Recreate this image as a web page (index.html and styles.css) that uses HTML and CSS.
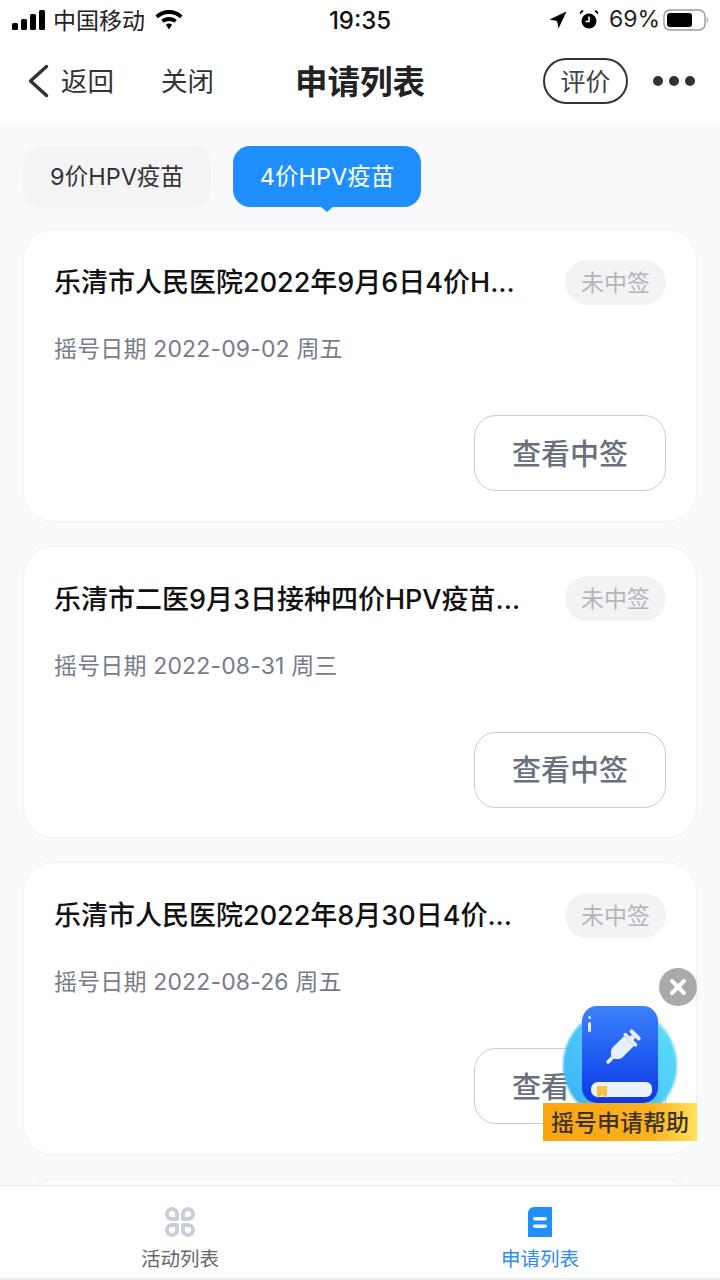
FILE: index.html
```html
<!DOCTYPE html>
<html>
    <head>
        <meta charset="utf-8">
        <title>申请列表</title>
        <link rel="stylesheet" href="styles.css">
    </head>
    <body>
        <div class="status">
            <div class="status-side">
                <svg class="signal" width="34" height="22" viewBox="0 0 34 22"><rect x="1" y="14" width="6" height="7" rx="1.5"/><rect x="10" y="10" width="6" height="11" rx="1.5"/><rect x="19" y="5" width="6" height="16" rx="1.5"/><rect x="28" y="1" width="6" height="20" rx="1.5"/></svg>
                <span class="carrier">中国移动</span>
                <svg class="wifi" width="30" height="22" viewBox="0 0 30 22"><path d="M15 1C9.500 1 5 3 1.500 6.400L4 9.200C7 6.500 10.900 5 15 5S23 6.500 26 9.200L28.500 6.400C25 3 20.500 1 15 1ZM15 8C12 8 9.300 9.100 7.200 11L9.700 13.800C11.100 12.600 13 11.900 15 11.900S18.900 12.600 20.300 13.800L22.800 11C20.700 9.100 18 8 15 8ZM15 14.500C13.800 14.500 12.700 14.900 11.900 15.700L15 20.500L18.100 15.700C17.300 14.900 16.200 14.500 15 14.500Z"/></svg>
            </div>
            <div class="clock">19:35</div>
            <div class="status-side">
                <svg class="arrow" width="18" height="18" viewBox="0 0 18 18"><path d="M17.500 .5L.5 8.500L8 10L9.500 17.500Z"/></svg>
                <svg class="alarm" width="20" height="22" viewBox="0 0 20 22"><circle cx="10" cy="12" r="7.500"/><path d="M1 5.500L5 1.800L2.800 1.200L.8 3ZM19 5.500L15 1.800L17.200 1.200L19.200 3Z"/><path d="M10 7.500V12.500H6.500" fill="none" stroke="#fff" stroke-width="1.600"/></svg>
                <span class="percent">69%</span>
                <svg class="battery" width="46" height="24" viewBox="0 0 46 24"><rect x="1" y="2" width="41" height="20" rx="6" fill="#fff" stroke="#999" stroke-width="1.400"/><rect x="4" y="5" width="25" height="14" rx="3"/><path d="M43.500 9V15C45 14.500 45.500 13.500 45.500 12S45 9.500 43.500 9Z" fill="#bbb"/></svg>
            </div>
        </div>
        <div class="nav">
            <div class="nav-left">
                <svg class="back" width="24" height="36" viewBox="0 0 24 36"><path d="M21.500 3.500L5.500 18L21.500 32.500" fill="none" stroke="#333" stroke-width="3.500" stroke-linecap="round" stroke-linejoin="round"/></svg>
                <span class="nav-link">返回</span>
                <span class="nav-link close-link">关闭</span>
            </div>
            <h1 class="nav-title">申请列表</h1>
            <div class="nav-right">
                <span class="rate">评价</span>
                <svg width="42" height="12" viewBox="0 0 42 12" fill="#333"><circle cx="5" cy="6" r="5"/><circle cx="21" cy="6" r="5"/><circle cx="37" cy="6" r="5"/></svg>
            </div>
        </div>
        <div class="main">
            <div class="tabs">
                <div class="tab">9价HPV疫苗</div>
                <div class="tab tab-on">4价HPV疫苗</div>
            </div>
            <div class="list">
                <div class="card">
                    <div class="card-top">
                        <div class="card-title">乐清市人民医院2022年9月6日4价H...</div>
                        <span class="badge">未中签</span>
                    </div>
                    <div class="card-date">摇号日期 2022-09-02 周五</div>
                    <div class="card-foot"><span class="check">查看中签</span></div>
                </div>
                <div class="card">
                    <div class="card-top">
                        <div class="card-title">乐清市二医9月3日接种四价HPV疫苗...</div>
                        <span class="badge">未中签</span>
                    </div>
                    <div class="card-date">摇号日期 2022-08-31 周三</div>
                    <div class="card-foot"><span class="check">查看中签</span></div>
                </div>
                <div class="card">
                    <div class="card-top">
                        <div class="card-title">乐清市人民医院2022年8月30日4价...</div>
                        <span class="badge">未中签</span>
                    </div>
                    <div class="card-date">摇号日期 2022-08-26 周五</div>
                    <div class="card-foot"><span class="check">查看中签</span></div>
                </div>
                <div class="card"></div>
            </div>
        </div>
        <div class="tabbar">
            <div class="bar-item">
                <svg width="32" height="32" viewBox="0 0 32 32" fill="none" stroke="#c9ced8" stroke-width="4" stroke-linejoin="round"><path d="M8 3A5 5 0 0 1 13 8V13H8A5 5 0 0 1 8 3Z"/><path d="M24 3A5 5 0 0 0 19 8V13H24A5 5 0 0 0 24 3Z"/><path d="M8 29A5 5 0 0 0 13 24V19H8A5 5 0 0 0 8 29Z"/><path d="M24 29A5 5 0 0 1 19 24V19H24A5 5 0 0 1 24 29Z"/></svg>
                <span>活动列表</span>
            </div>
            <div class="bar-item bar-on">
                <svg width="32" height="32" viewBox="0 0 32 32"><path d="M10 1H27A1 1 0 0 1 28 2V31H4V7A6 6 0 0 1 10 1Z" fill="#1f8fff"/><rect x="9" y="11" width="14" height="3.500" rx="1.700" fill="#fff"/><rect x="9" y="18.500" width="14" height="3.500" rx="1.700" fill="#fff"/></svg>
                <span>申请列表</span>
            </div>
        </div>
        <div class="helper">
            <svg class="helper-close" width="38" height="38" viewBox="0 0 38 38"><circle cx="19" cy="19" r="19" fill="#aaa"/><path d="M13 13L25 25M25 13L13 25" stroke="#fff" stroke-width="4" stroke-linecap="round"/></svg>
            <svg class="helper-book" width="116" height="136" viewBox="0 0 116 136">
                <defs>
                    <linearGradient id="ball" x1="1" y1="0" x2="0" y2="1"><stop offset="0" stop-color="#62e2fb"/><stop offset="1" stop-color="#38aef6"/></linearGradient>
                    <linearGradient id="cover" x1="0" y1="0" x2="0" y2="1"><stop offset="0" stop-color="#3d82fb"/><stop offset="1" stop-color="#0a38e6"/></linearGradient>
                    <filter id="soft"><feGaussianBlur stdDeviation="1"/></filter>
                </defs>
                <circle cx="58" cy="77" r="57" fill="url(#ball)" filter="url(#soft)"/>
                <rect x="20" y="18" width="76" height="97" rx="15" fill="url(#cover)"/>
                <rect x="26" y="28" width="3" height="3" rx="1.500" fill="#dfe9ff"/>
                <rect x="26" y="34" width="3" height="10" rx="1.500" fill="#dfe9ff"/>
                <g transform="rotate(45 59 61)" fill="#e8f0ff">
                    <rect x="52" y="39" width="14" height="4" rx="2"/>
                    <rect x="56.500" y="43" width="5" height="4"/>
                    <rect x="50" y="46" width="18" height="3.500" rx="1.700"/>
                    <path d="M52 49.500H66V66C66 69 62 72 61 73H57C56 72 52 69 52 66Z"/>
                    <rect x="57.200" y="72" width="3.600" height="9" rx="1.800"/>
                </g>
                <path d="M36 94H84A6 6 0 0 1 90 100V103A6 6 0 0 1 84 109H36C31 109 29 105 29 101.500S31 94 36 94Z" fill="#eaf1ff"/>
                <path d="M35 98H45V110L40 107L35 110Z" fill="#fbbf45"/>
            </svg>
            <div class="helper-label">摇号申请帮助</div>
        </div>
    </body>
</html>
```

FILE: styles.css
```css
*{box-sizing:border-box;}
body,html{
    margin: 0;
    width: 720px;
    height: 1280px;
    overflow: hidden;
    font-family: Inter, "Noto Sans CJK SC", sans-serif;
    color: #222;
}
body {display:flex; flex-direction:column; position:relative; background-color:#fff;}

.status{display:flex; justify-content:space-between; align-items:center; height:40px; padding:0 11px 0 11px; position:relative; flex:none;}
.status-side{display:flex; align-items:center; font-size:23px; color:#222;}
.carrier{margin-left:8px; padding-bottom:3px;}
.wifi{margin-left:9px;}
.clock{position:absolute; left:0; right:0; text-align:center; font-size:24px; font-weight:500; color:#111;}
.alarm{margin-left:12px;}
.percent{margin-left:10px; padding-bottom:2px;}
.battery{margin-left:3px;}

.nav{display:grid; grid-template-columns:1fr auto 1fr; align-items:center; height:82px; padding:0 25px; flex:none;}
.nav-left{display:flex; align-items:center;}
.back{margin-right:12px;}
.nav-link{font-size:26.500px; padding-bottom:3px; color:#333;}
.close-link{margin-left:47px;}
.nav-title{margin:0; padding-bottom:4px; font-size:32.500px; font-weight:700; color:#222;}
.nav-right{display:flex; align-items:center; justify-content:flex-end; gap:25px;}
.rate{display:flex; align-items:center; justify-content:center; width:85px; height:46px; padding-bottom:3px; border:2px solid #333; border-radius:23px; font-size:25px; color:#444;}

.main{flex:1; min-height:0; overflow:hidden; background-color:#fafafc; padding:24px 23px 0 23px;}
.tabs{display:flex; gap:22px;}
.tab{position:relative; display:flex; align-items:center; justify-content:center; width:188px; height:61px; padding-bottom:3px; border-radius:17px; background-color:#f4f4f6; font-size:23.500px; color:#333;}
.tab-on{background-color:#1f8fff; color:#fff;}
.tab-on::after{content:""; position:absolute; left:50%; bottom:-5px; margin-left:-7px; border-left:7px solid transparent; border-right:7px solid transparent; border-top:6px solid #1f8fff;}

.list{display:flex; flex-direction:column; gap:24px; margin-top:22px;}
.card{height:292.670px; flex:none; background-color:#fff; border:1px solid #f0f0f3; border-radius:30px; padding:29px 30px 30px 30px;}
.card-top{display:flex; justify-content:space-between; align-items:center; height:46px;}
.card-title{font-size:27px; padding-bottom:3px; font-weight:500; color:#111; white-space:nowrap;}
.badge{display:flex; align-items:center; justify-content:center; width:101px; height:45px; padding-bottom:3px; border-radius:23px; background-color:#f2f3f5; font-size:23px; color:#b4b6bc;}
.card-date{margin-top:27px; font-size:23px; letter-spacing:.15px; line-height:34px; color:#767c8a;}
.card-foot{display:flex; justify-content:flex-end; margin-top:49px;}
.check{display:flex; align-items:center; justify-content:center; width:192px; height:76px; padding-bottom:3px; border:1px solid #c8ccd2; border-radius:22px; font-size:29px; font-weight:500; color:#68707e;}

.tabbar{display:flex; height:95px; flex:none; background-color:#fff; border-top:1px solid #e9e9ec; border-bottom:2px solid #ececef;}
.bar-item{flex:1; display:flex; flex-direction:column; align-items:center; padding-top:20px; font-size:19.500px; line-height:30px; color:#666;}
.bar-item svg{display:block; margin-bottom:6px;}
.bar-on{color:#2b8cf5;}

.helper{position:absolute; left:543px; top:968px; width:154px; height:173px;}
.helper-close{position:absolute; right:0; top:0;}
.helper-book{position:absolute; left:19px; top:20px;}
.helper-label{position:absolute; left:0; right:0; bottom:0; height:38px; padding-bottom:2px; display:flex; align-items:center; justify-content:center; background:linear-gradient(90deg,#fba410,#fdb21f 70%,#ffe15a); font-size:23px; font-weight:500; color:#3a3328;}
```
